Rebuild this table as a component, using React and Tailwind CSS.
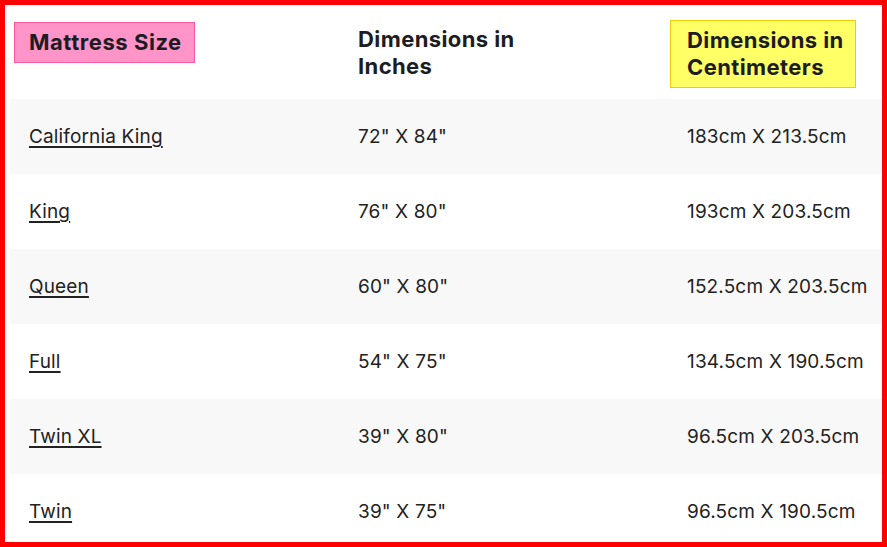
const ROWS = [
  ["California King", '72" X 84"', "183cm X 213.5cm"],
  ["King", '76" X 80"', "193cm X 203.5cm"],
  ["Queen", '60" X 80"', "152.5cm X 203.5cm"],
  ["Full", '54" X 75"', "134.5cm X 190.5cm"],
  ["Twin XL", '39" X 80"', "96.5cm X 203.5cm"],
  ["Twin", '39" X 75"', "96.5cm X 190.5cm"],
];

export default function App() {
  return (
    <div
      className="w-[887px] h-[547px] overflow-hidden border-[5px] border-[#ff0000] bg-white pl-[5px] text-[#222]"
      style={{ fontFamily: "Inter, 'Noto Sans', sans-serif" }}
    >
      {/* header */}
      <div className="grid h-[94px] grid-cols-[329px_329px_214px] items-start text-[22px] font-bold leading-[27px] tracking-[0.4px] text-[#1c1c22]">
        <div className="pt-[17px] pl-[4px]">
          <span className="inline-block border border-[#f95aa0] bg-[#ff94c9] py-[6px] pl-[14px] pr-[12px] tracking-[0.55px]">
            Mattress Size
          </span>
        </div>
        <div className="pt-[21px] pl-[19px]">
          Dimensions in
          <br />
          Inches
        </div>
        <div className="pt-[15px] pl-[2px]">
          <div className="w-[186px] border border-[#f2cc00] bg-[#ffff66] py-[6px] pl-[16px]">
            Dimensions in
            <br />
            Centimeters
          </div>
        </div>
      </div>

      {/* rows */}
      {ROWS.map((r, i) => (
        <div
          key={r[0]}
          className={`grid h-[75px] grid-cols-[329px_329px_214px] items-center pt-[2px] text-[19px] tracking-[0.15px] whitespace-nowrap ${
            i % 2 === 0 ? "bg-[#f8f8f8]" : "bg-white"
          }`}
        >
          <div className="pl-[19px]">
            <a href="#" className="underline decoration-[1.5px] underline-offset-[3px]">
              {r[0]}
            </a>
          </div>
          <div className="pl-[19px]">{r[1]}</div>
          <div className="pl-[19px]">{r[2]}</div>
        </div>
      ))}
    </div>
  );
}
